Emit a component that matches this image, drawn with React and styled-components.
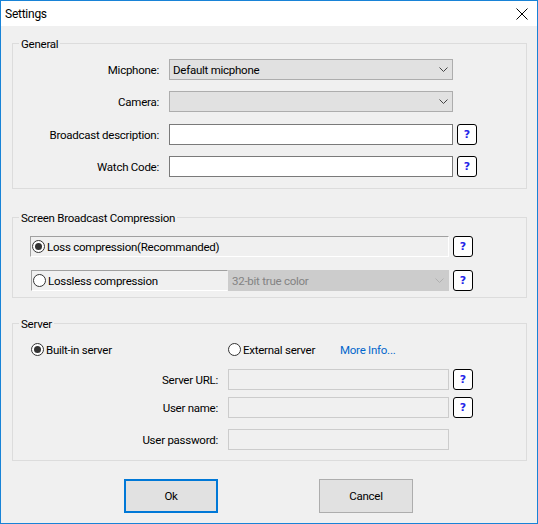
import React from "react";
import styled, { createGlobalStyle } from "styled-components";

const Global = createGlobalStyle`
  html, body { margin: 0; padding: 0; background: #f0f0f0; }
  body { font-family: Roboto, "Noto Sans", sans-serif; font-size: 11.5px; letter-spacing: -0.25px; color: #000; }
  * { box-sizing: border-box; }
`;

const Window = styled.div`
  width: 538px;
  height: 524px;
  border: 1px solid #1883d7;
  background: #f0f0f0;
  display: flex;
  flex-direction: column;
`;

const TitleBar = styled.div`
  height: 25px;
  background: #fff;
  display: flex;
  align-items: center;
  justify-content: space-between;
  padding: 0 9px 0 4px;
  font-size: 12px;
`;

const Body = styled.div`
  flex: 1;
  display: flex;
  flex-direction: column;
  padding: 17px 10px 0 11px;
`;

const Group = styled.div`
  position: relative;
  border: 1px solid #dcdcdc;
  margin-top: ${(p) => p.$mt || 0}px;
  padding: ${(p) => p.$pad};
  display: flex;
  flex-direction: column;
`;

const Legend = styled.span`
  position: absolute;
  top: -8px;
  left: 6px;
  padding: 0 2px;
  background: #f0f0f0;
  line-height: 16px;
`;

const Row = styled.div`
  display: flex;
  align-items: center;
  height: 21px;
  margin-top: ${(p) => p.$mt || 0}px;
  padding-left: ${(p) => p.$pl || 0}px;
`;

const Label = styled.div`
  width: ${(p) => p.$w}px;
  margin-right: 10px;
  text-align: right;
  white-space: nowrap;
`;

const Select = styled.div`
  width: ${(p) => p.$w}px;
  height: 21px;
  display: flex;
  align-items: center;
  justify-content: space-between;
  padding: 0 4px 0 3px;
  background: ${(p) => (p.$disabled ? "#cccccc" : "#e1e1e1")};
  border: 1px solid ${(p) => (p.$disabled ? "#cccccc" : "#adadad")};
  color: ${(p) => (p.$disabled ? "#838383" : "#000")};
  white-space: nowrap;
`;

const Input = styled.div`
  width: ${(p) => p.$w}px;
  height: 21px;
  background: ${(p) => (p.$disabled ? "#f0f0f0" : "#fff")};
  border: 1px solid ${(p) => (p.$disabled ? "#cccccc" : "#7a7a7a")};
`;

const Help = styled.div`
  width: 20px;
  height: 21px;
  margin-left: 4px;
  background: #fff;
  border: 1px solid #000;
  border-radius: 3px;
  display: flex;
  align-items: center;
  justify-content: center;
  color: #2424e8;
  font-family: "DejaVu Sans", sans-serif;
  font-weight: bold;
  font-size: 11px;
  letter-spacing: 0;
`;

const Sunken = styled.div`
  width: ${(p) => p.$w}px;
  height: 21px;
  margin-left: ${(p) => p.$ml || 0}px;
  display: flex;
  align-items: center;
  padding-left: 1px;
  border-top: 1px solid #a0a0a0;
  border-left: 1px solid #a0a0a0;
  border-bottom: 1px solid #fff;
  border-right: 1px solid ${(p) => (p.$noRight ? "transparent" : "#fff")};
`;

const RadioWrap = styled.div`
  display: flex;
  align-items: center;
  white-space: nowrap;
  width: ${(p) => (p.$w ? `${p.$w}px` : "auto")};
`;

const Circle = styled.span`
  width: 13px;
  height: 13px;
  border-radius: 50%;
  border: 1px solid #333;
  background: #fff;
  display: flex;
  align-items: center;
  justify-content: center;
  margin-right: 2px;
  flex: none;
  &::after {
    content: "";
    width: 7px;
    height: 7px;
    border-radius: 50%;
    background: ${(p) => (p.$on ? "#333" : "transparent")};
  }
`;

const Link = styled.span`
  color: #0066cc;
`;

const ButtonRow = styled.div`
  display: flex;
  justify-content: center;
  gap: 101px;
  margin-top: 18px;
  padding-right: 2px;
`;

const Button = styled.div`
  width: 94px;
  height: 34px;
  display: flex;
  align-items: center;
  justify-content: center;
  background: #e1e1e1;
  border: ${(p) => (p.$default ? "2px solid #0078d7" : "1px solid #adadad")};
`;

const Chevron = ({ light }) => (
  <svg width="9" height="5" viewBox="0 0 9 5">
    <polyline points="0.5,0.5 4.5,4.5 8.5,0.5" fill="none" stroke={light ? "#b0b0b0" : "#444"} strokeWidth="1" />
  </svg>
);

const Radio = ({ on, children, w }) => (
  <RadioWrap $w={w}>
    <Circle $on={on} />
    {children}
  </RadioWrap>
);

export default function App() {
  return (
    <>
      <Global />
      <Window>
        <TitleBar>
          <span>Settings</span>
          <svg width="12" height="12" viewBox="0 0 12 12">
            <path d="M0.5 0.5 L11.5 11.5 M11.5 0.5 L0.5 11.5" stroke="#000" strokeWidth="1" />
          </svg>
        </TitleBar>
        <Body>
          <Group $pad="15px 0 11px 0">
            <Legend>General</Legend>
            <Row>
              <Label $w={146}>Micphone:</Label>
              <Select $w={284}>
                <span>Default micphone</span>
                <Chevron />
              </Select>
            </Row>
            <Row $mt={11}>
              <Label $w={146}>Camera:</Label>
              <Select $w={284}>
                <span />
                <Chevron />
              </Select>
            </Row>
            <Row $mt={12}>
              <Label $w={146}>Broadcast description:</Label>
              <Input $w={284} />
              <Help>?</Help>
            </Row>
            <Row $mt={11}>
              <Label $w={146}>Watch Code:</Label>
              <Input $w={284} />
              <Help>?</Help>
            </Row>
          </Group>

          <Group $mt={28} $pad="18px 0 6px 0">
            <Legend>Screen Broadcast Compression</Legend>
            <Row $pl={17}>
              <Sunken $w={419}>
                <Radio on>Loss compression(Recommanded)</Radio>
              </Sunken>
              <Help>?</Help>
            </Row>
            <Row $pl={17} $mt={13}>
              <Sunken $w={197} $ml={1} $noRight>
                <Radio>Lossless compression</Radio>
              </Sunken>
              <Select $w={221} $disabled>
                <span>32-bit true color</span>
                <Chevron light />
              </Select>
              <Help>?</Help>
            </Row>
          </Group>

          <Group $mt={25} $pad="15px 0 10px 0">
            <Legend>Server</Legend>
            <Row $pl={18}>
              <Radio on w={197}>Built-in server</Radio>
              <Radio w={112}>External server</Radio>
              <Link>More Info...</Link>
            </Row>
            <Row $mt={9}>
              <Label $w={205}>Server URL:</Label>
              <Input $w={221} $disabled />
              <Help>?</Help>
            </Row>
            <Row $mt={7}>
              <Label $w={205}>User name:</Label>
              <Input $w={221} $disabled />
              <Help>?</Help>
            </Row>
            <Row $mt={11}>
              <Label $w={205}>User password:</Label>
              <Input $w={221} $disabled />
            </Row>
          </Group>

          <ButtonRow>
            <Button $default>Ok</Button>
            <Button>Cancel</Button>
          </ButtonRow>
        </Body>
      </Window>
    </>
  );
}
